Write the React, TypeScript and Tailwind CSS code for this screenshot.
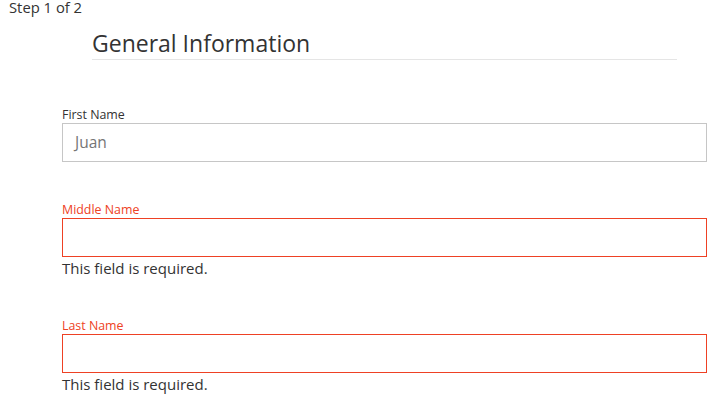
import React from "react";

const font = { fontFamily: '"Open Sans", "Noto Sans", sans-serif' };

function Field({ label, value, error }: { label: string; value?: string; error?: boolean }) {
  return (
    <div className="flex flex-col">
      <label className={`block text-[12.4px] leading-[18px] h-[18px] pt-[2px] overflow-visible ${error ? "text-[#ee4124]" : "text-[#333333]"}`}>{label}</label>
      <div
        className={`mt-[1px] h-[39px] w-[645px] border flex items-center pl-[12px] text-[15.5px] text-[#757575] ${
          error ? "border-[#ee4124]" : "border-[#c6c6c6]"
        }`}
      >
        {value}
      </div>
      {error && <div className="text-[15px] leading-[21px] pt-[1px] text-[#333333]">This field is required.</div>}
    </div>
  );
}

export default function App() {
  return (
    <div className="w-[727px] h-[406px] bg-white overflow-hidden text-[#333333]" style={font}>
      <div className="pl-[9px] text-[14.8px] leading-[15px] h-[15px] whitespace-nowrap">Step 1 of 2</div>
      <div className="pl-[62px]">
        <div className="ml-[30px] w-[585px] border-b border-[#e5e5e5] pt-[14px] pb-[2px]">
          <div className="text-[23px] leading-[28px]">General Information</div>
        </div>
        <div className="mt-[44px] flex flex-col">
          <Field label="First Name" value="Juan" />
          <div className="h-[37px]" />
          <Field label="Middle Name" error />
          <div className="h-[36px]" />
          <Field label="Last Name" error />
        </div>
      </div>
    </div>
  );
}
